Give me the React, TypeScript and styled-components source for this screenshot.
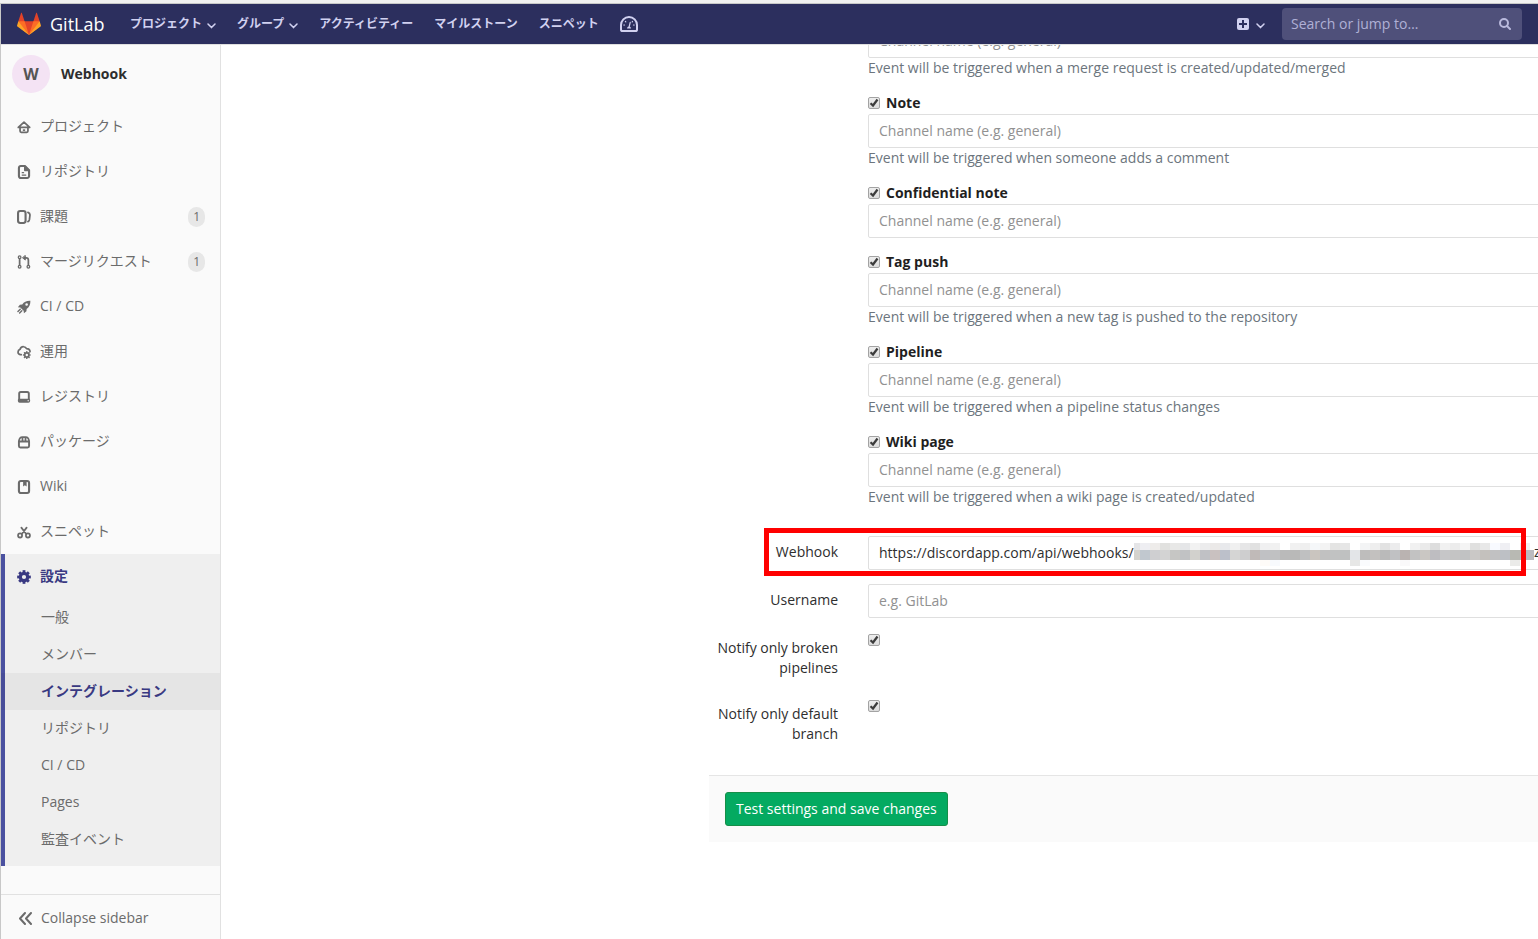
import React, { useState } from "react";
import styled, { createGlobalStyle, css } from "styled-components";

const GlobalStyle = createGlobalStyle`
  *, *::before, *::after { box-sizing: border-box; }
  html, body, #root { height: 100%; }
  body {
    margin: 0;
    overflow: hidden;
    background: #fff;
    color: #2e2e2e;
    font: 14px/20px "Open Sans", "Noto Sans CJK JP", sans-serif;
  }
  a { color: inherit; text-decoration: none; }
  button, input { font: inherit; color: inherit; }
  ul { list-style: none; margin: 0; padding: 0; }
`;

const Page = styled.div`
  display: flex;
  flex-direction: column;
  height: 100%;
  min-height: 0;
  border-top: 3px solid #f1f1f1;
`;

const Frame = styled.div`
  flex: 1;
  min-height: 0;
  display: flex;
  flex-direction: column;
  border-top: 1px solid #c8c8c8;
  border-left: 1px solid #c8c8c8;
`;

/* ---------- top bar ---------- */

const Navbar = styled.header`
  flex: none;
  display: flex;
  align-items: center;
  height: 41px;
  padding: 0 16px;
  background: #2c2f5e;
  border-bottom: 1px solid #dfdfdf;
  color: #d1d1f0;
`;

const Brand = styled.a`
  display: flex;
  align-items: center;
  gap: 9px;
  width: 113px;
  color: #fff;
  font-size: 18px;
`;

const NavList = styled.ul`
  display: flex;
  align-items: center;
  gap: 21px;
  flex: 1;
`;

const NavLink = styled.a`
  display: flex;
  align-items: center;
  gap: 5px;
  font-size: 12px;
  font-weight: 700;
  white-space: nowrap;
`;

const NewButton = styled.button`
  display: flex;
  align-items: center;
  gap: 7px;
  margin-right: 17px;
  padding: 0;
  border: 0;
  background: none;
  color: #d1d1f0;
`;

const SearchBox = styled.label`
  display: flex;
  align-items: center;
  width: 240px;
  height: 32px;
  padding: 0 11px 0 9px;
  border-radius: 4px;
  background: #4f507a;
  color: #b9b9dc;
`;

const SearchInput = styled.input`
  flex: 1;
  min-width: 0;
  padding: 0;
  border: 0;
  outline: 0;
  background: none;
  &::placeholder { color: #b0b0d6; opacity: 1; }
`;

/* ---------- sidebar ---------- */

const Body = styled.div`
  flex: 1;
  min-height: 0;
  display: flex;
`;

const Sidebar = styled.nav`
  flex: none;
  display: flex;
  flex-direction: column;
  width: 220px;
  background: #fafafa;
  border-right: 1px solid #e1e1e1;
  color: #6b6b6b;
`;

const ProjectLink = styled.a`
  display: flex;
  align-items: center;
  gap: 11px;
  height: 59px;
  padding: 0 11px 2px;
  color: #2e2e2e;
  font-weight: 700;
`;

const Avatar = styled.span`
  display: grid;
  place-items: center;
  width: 38px;
  height: 38px;
  border-radius: 50%;
  background: #f4e3f4;
  color: #555;
  font-size: 16px;
`;

const barActive = css`
  background: #efefef;
  padding-bottom: 8px;
  box-shadow: inset 4px 0 0 #4b51a0;
`;

const NavSection = styled.li<{ $active?: boolean }>`
  ${(p) => p.$active && barActive}
`;

const Badge = styled.span`
  margin-left: auto;
  padding: 0 5px;
  border-radius: 10px;
  background: #e7e7e7;
  font-size: 12px;
`;

const SideLink = styled.a<{ $active?: boolean }>`
  display: flex;
  align-items: center;
  gap: 9px;
  height: 45px;
  padding: 0 15px 2px 16px;
  color: ${(p) => (p.$active ? "#393982" : "inherit")};
  font-weight: ${(p) => (p.$active ? 700 : 400)};
  svg, ${Badge} { margin-top: 2px; }
`;

const SubLink = styled.a<{ $active?: boolean }>`
  display: flex;
  align-items: center;
  height: 37px;
  padding: 0 16px 2px 40px;
  background: ${(p) => (p.$active ? "rgba(0, 0, 0, 0.04)" : "none")};
  color: ${(p) => (p.$active ? "#393982" : "inherit")};
  font-weight: ${(p) => (p.$active ? 700 : 400)};
`;

const Collapse = styled.button`
  display: flex;
  align-items: center;
  gap: 8px;
  height: 45px;
  margin-top: auto;
  padding: 2px 16px 0 17px;
  border: 0;
  border-top: 1px solid #e1e1e1;
  background: none;
`;

/* ---------- settings form ---------- */

const Main = styled.main`
  flex: 1;
  min-width: 0;
  overflow: hidden;
  padding-left: 488px;
`;

/* The form is scrolled: its first visible field sits partly under the bar. */
const Form = styled.form`
  margin: -21px -16px 0 0;
`;

const Events = styled.div`
  display: flex;
  flex-direction: column;
  gap: 15px;
  margin: 0 0 28px 159px;
`;

const EventTitle = styled.label`
  display: flex;
  align-items: center;
  gap: 6px;
  height: 20px;
  padding-bottom: 2px;
  color: #1f1f1f;
  font-weight: 700;
`;

const TextInput = styled.input`
  display: block;
  width: 100%;
  height: 34px;
  padding: 0 10px 2px;
  border: 1px solid #dfdfdf;
  border-radius: 2px;
  outline: 0;
  background: #fff;
  &::placeholder { color: #919191; opacity: 1; }
`;

const Help = styled.p`
  margin: 0;
  padding-bottom: 1px;
  color: #6c757d;
`;

const Rows = styled.div`
  display: flex;
  flex-direction: column;
  gap: 14px;
  margin-bottom: 25px;
`;

const Row = styled.div`
  position: relative;
  display: grid;
  grid-template-columns: 129px minmax(0, 1fr);
  column-gap: 30px;
`;

const RowLabel = styled.label`
  padding: 6px 0;
  text-align: right;
`;

const Control = styled.div<{ $tick?: boolean }>`
  position: relative;
  padding-top: ${(p) => (p.$tick ? 2 : 0)}px;
`;

const Tick = styled.span`
  position: relative;
  display: block;
  flex: none;
  width: 12px;
  height: 12px;
  svg { position: absolute; inset: 0; pointer-events: none; }
`;

const TickInput = styled.input`
  appearance: none;
  display: block;
  width: 12px;
  height: 12px;
  margin: 0;
  border: 1px solid #a3a3a3;
  border-radius: 2px;
  background: linear-gradient(#eee, #dcdcdc);
  & + svg { visibility: hidden; }
  &:checked + svg { visibility: visible; }
`;

const Redaction = styled.div`
  position: absolute;
  top: 7px;
  left: 266px;
  display: flex;
  line-height: 18px;
  pointer-events: none;
  svg { flex: none; }
`;

const Highlight = styled.div`
  position: absolute;
  top: -8px;
  bottom: -6px;
  left: 55px;
  right: 28px;
  border: 5px solid #f00;
  pointer-events: none;
`;

const FormFooter = styled.footer`
  padding: 16px;
  border-top: 1px solid #e5e5e5;
  background: #fafafa;
`;

const SaveButton = styled.button`
  height: 34px;
  padding: 0 10px;
  border: 1px solid #168f48;
  border-radius: 3px;
  background: #04aa61;
  color: #fff;
`;

/* ---------- icons ---------- */

const Line = ({ children, size = 14 }: { children: React.ReactNode; size?: number }) => (
  <svg width={size} height={size} viewBox="0 0 16 16" fill="none" stroke="currentColor" strokeWidth="2" strokeLinecap="round" strokeLinejoin="round" aria-hidden="true">
    {children}
  </svg>
);

const ChevronSvg = styled.svg`
  margin-top: 3px;
`;

const Chevron = () => (
  <ChevronSvg width="9" height="6" viewBox="0 0 9 6" fill="none" stroke="currentColor" strokeWidth="1.5" strokeLinecap="round" strokeLinejoin="round" aria-hidden="true">
    <path d="M1 1l3.5 3.6L8 1" />
  </ChevronSvg>
);

const Logo = () => (
  <svg width="24" height="24" viewBox="0 0 36 36" aria-hidden="true">
    <path fill="#e24329" d="M2 14l9.38 9v-9l-4-12.28c-.205-.632-1.176-.632-1.38 0z" />
    <path fill="#e24329" d="M34 14l-9.38 9v-9l4-12.28c.205-.632 1.176-.632 1.38 0z" />
    <path fill="#e24329" d="M18 34.38L3 14h30z" />
    <path fill="#fc6d26" d="M18 34.38L11.38 14H2l4 11z" />
    <path fill="#fc6d26" d="M18 34.38L24.62 14H34l-4 11z" />
    <path fill="#fca326" d="M2 14L.1 20.16c-.18.565 0 1.2.5 1.56l17.42 12.66z" />
    <path fill="#fca326" d="M34 14l1.9 6.16c.18.565 0 1.2-.5 1.56L18 34.38z" />
  </svg>
);

const Gauge = () => (
  <svg width="18" height="16" viewBox="0 0 18 16" fill="none" stroke="currentColor" aria-hidden="true">
    <path strokeWidth="2" d="M2.6 15h12.8c.9 0 1.6-.7 1.6-1.6V9A8 8 0 0 0 1 9v4.400c0 .9.700 1.600 1.600 1.600z" />
    <path strokeWidth="1.200" strokeLinecap="round" d="M9 11.500l1.200-5.200M3.800 9h.7M13.500 9h.7M5.400 5.500l.4.400M12.500 5.500l-.3.400" />
    <path fill="currentColor" stroke="none" d="M7 12.500a2 2 0 0 1 4 0z" />
  </svg>
);

const PlusSquare = () => (
  <svg width="12" height="12" viewBox="0 0 12 12" aria-hidden="true">
    <rect width="12" height="12" rx="2" fill="currentColor" />
    <path d="M6 2v8M2 6h8" stroke="#2c2f5e" strokeWidth="2" />
  </svg>
);

const SearchIcon = () => (
  <svg width="12" height="12" viewBox="0 0 12 12" fill="none" stroke="currentColor" strokeWidth="2" strokeLinecap="round" aria-hidden="true">
    <circle cx="5" cy="5" r="4" />
    <path d="M8 8l3 3" />
  </svg>
);

const CheckMark = () => (
  <svg width="12" height="12" viewBox="0 0 12 12" fill="none" stroke="#3c3c3c" strokeWidth="2.200" aria-hidden="true">
    <path d="M2.500 6.200L5 8.500l4.500-6" />
  </svg>
);

const cogTeeth = [0, 45, 90, 135, 180, 225, 270, 315];

const icons: Record<string, React.ReactNode> = {
  home: (
    <Line>
      <path d="M1.500 8.500L8 2.500l6.500 6zM3.500 9v3.600c0 .8.600 1.400 1.400 1.400h6.200c.8 0 1.400-.6 1.400-1.400V9" />
      <path d="M7.500 11.500h1" />
    </Line>
  ),
  doc: (
    <Line>
      <path strokeWidth="2.400" d="M4.500 1.200H9l4.800 4.800v6.500a2.200 2.200 0 0 1-2.200 2.300H4.500a2.200 2.200 0 0 1-2.300-2.300v-9a2.200 2.200 0 0 1 2.300-2.300z" />
      <path fill="currentColor" d="M9 1.500v4.500h4.500z" />
      <path strokeWidth="1.500" d="M6 8.800h1.500M6 11.500h4" />
    </Line>
  ),
  issues: (
    <Line>
      <rect strokeWidth="2.400" x="1.200" y="1.200" width="8.600" height="13.600" rx="2.400" />
      <path d="M12.500 2.800c1.800.6 2.500 1.500 2.300 3.200l-.6 5c-.2 1.200-.8 1.900-1.700 2.200" />
    </Line>
  ),
  merge: (
    <Line>
      <g strokeWidth="1.500">
        <circle cx="3" cy="2.600" r="1.500" />
        <circle cx="3" cy="13.400" r="1.500" />
        <circle cx="13" cy="13.400" r="1.500" />
      </g>
      <path d="M3 5v6M13 11V6c0-1.700-.8-2.600-2.500-2.600H8.500" />
      <path fill="currentColor" strokeWidth="1" d="M9.500.800v5L6.500 3.400z" />
    </Line>
  ),
  rocket: (
    <svg width="14" height="14" viewBox="0 0 16 16" fill="currentColor" aria-hidden="true">
      <path fillRule="evenodd" d="M15.300.800c-4.300-.2-7.200 1.300-9.300 4.200L3.300 5.300 1 8.200l2.800.3 3.800 3.800.3 2.900 2.900-2.400.2-2.600c3-2.100 4.500-5.100 4.300-9.400zM11 6.700a1.500 1.500 0 1 1 0-3 1.500 1.500 0 0 1 0 3z" />
      <path stroke="currentColor" strokeWidth="1.600" strokeLinecap="round" d="M3.700 10.500l-2.600 2.600M5.500 12.300l-2.500 2.500" />
    </svg>
  ),
  cloud: (
    <Line>
      <path d="M4.800 11H4.200A2.800 2.800 0 0 1 1.200 8c0-1.500 1-2.700 2.200-3 .8-2 2.300-3.200 4.300-3 1.600.1 2.600.9 3.200 2.100 2.300.1 3.900 1.500 4 3.400" />
      <circle cx="11.200" cy="11.500" r="2.400" />
      <g strokeWidth="1.800">
        {cogTeeth.map((a) => (
          <path key={a} d="M11.200 8v-.2" transform={`rotate(${a} 11.200 11.500)`} />
        ))}
      </g>
    </Line>
  ),
  disk: (
    <Line>
      <path strokeWidth="2.200" d="M2.500 10.500V4c0-1 .7-1.800 1.800-1.800h7.400c1.100 0 1.800.8 1.800 1.800v6.500" />
      <path fill="currentColor" stroke="none" fillRule="evenodd" d="M2.500 10h11c.8 0 1.500.7 1.500 1.500v1a2 2 0 0 1-2 2H3a2 2 0 0 1-2-2v-1c0-.8.700-1.500 1.500-1.500zm9.700 1.500v1.300h1.300v-1.300z" />
    </Line>
  ),
  package: (
    <Line>
      <path strokeWidth="2.200" d="M2.200 7.500v5c0 1 .7 1.700 1.700 1.700h8.200c1 0 1.700-.7 1.700-1.700v-5z" />
      <path d="M2.200 7c.4-3 1.800-4.500 3.800-4.500h4c2 0 3.400 1.500 3.800 4.500M6.300 3v4M9.700 3v4" />
    </Line>
  ),
  book: (
    <Line>
      <rect strokeWidth="2.400" x="2.200" y="1.200" width="11.600" height="13.600" rx="2.200" />
      <path fill="currentColor" stroke="none" d="M7 2h4v5.500L9 6 7 7.500z" />
    </Line>
  ),
  scissors: (
    <Line>
      <circle cx="3.500" cy="12" r="2.300" />
      <circle cx="12.500" cy="12" r="2.300" />
      <path d="M5.500 10.200L11 3M10.500 10.200L5 3" />
    </Line>
  ),
  cog: (
    <svg width="14" height="14" viewBox="0 0 16 16" fill="none" stroke="currentColor" aria-hidden="true">
      <circle cx="8" cy="8" r="4.200" strokeWidth="3.600" />
      {cogTeeth.map((a) => (
        <path key={a} strokeWidth="3.200" d="M8 3V.2" transform={`rotate(${a} 8 8)`} />
      ))}
    </svg>
  ),
};

const DoubleLeft = () => (
  <svg width="15" height="14" viewBox="0 0 15 14" fill="none" stroke="#6b6b6b" strokeWidth="2" strokeLinecap="round" strokeLinejoin="round" aria-hidden="true">
    <path d="M7 2L2 7.500 7 13M13 2L8 7.500l5 5.500" />
  </svg>
);

/* ---------- blurred part of the webhook address ---------- */

const upperCells = "e5e5e7 eeeef2 eeecea e1e1df e8e8e7 e5e6e8 f2f2f2 ececed ebe9e8 e8e9ec f0f0f0 e6e6e7 e1e1e1 f0f0f1 f1f1f1 ffffff f1f1f1 efefef f5f7f9 f3f3f3 e4e4e3 e6e6e6 ffffff f3f4f5 eeeeee e2e2e2 ececed ffffff f1f1f1 eaeaea dddddd f1f1f1 ececec f4f4f4 e0e0df e8e8e8 f8faff efeff3 ffffff f1f1f1".split(" ");
const middleCells = "d4d3ce c1c8cf cfcfd1 d3d3d3 c6c6c4 c1c2c4 d2d1cd c0c1c5 c9c1c0 bcc0ca d5d5d4 cececf c0bab8 c0c1c4 c0c1c2 bababa b9b9b8 bfc0c1 cac5bf c1c1c1 c1c2c2 bfc1c1 e3e5e8 bebdbc c3c1bf bababa c0c1c3 bab3b1 c2c2c2 cac7c3 bebdc1 c6c6c8 c4c4c4 c1c2c3 cac8c6 c4c1bd c1c1c2 bdc0c5 b8b9b3 bbbbbf".split(" ");
const lowerCells: Record<number, string> = { 13: "fefbf8", 14: "f8fafd", 22: "e7e7e6", 23: "fafbfd", 27: "faf9fa", 38: "ebebe9" };

const Mosaic = () => (
  <svg width="400" height="23" viewBox="4 0 400 23" shapeRendering="crispEdges" aria-hidden="true">
    {upperCells.map((c, i) => (
      <rect key={`u${i}`} x={i * 10} y="0" width="10" height="7" fill={`#${c}`} />
    ))}
    {middleCells.map((c, i) => (
      <rect key={`m${i}`} x={i * 10} y="7" width="10" height="10" fill={`#${c}`} />
    ))}
    <rect x="400" y="7" width="4" height="10" fill="#bbbbbf" />
    {Object.entries(lowerCells).map(([i, c]) => (
      <rect key={`l${i}`} x={Number(i) * 10} y="17" width="10" height="6" fill={`#${c}`} />
    ))}
  </svg>
);

/* ---------- data ---------- */

const sections = [
  { icon: "home", label: "プロジェクト" },
  { icon: "doc", label: "リポジトリ" },
  { icon: "issues", label: "課題", count: 1 },
  { icon: "merge", label: "マージリクエスト", count: 1 },
  { icon: "rocket", label: "CI / CD" },
  { icon: "cloud", label: "運用" },
  { icon: "disk", label: "レジストリ" },
  { icon: "package", label: "パッケージ" },
  { icon: "book", label: "Wiki" },
  { icon: "scissors", label: "スニペット" },
];

const settings = ["一般", "メンバー", "インテグレーション", "リポジトリ", "CI / CD", "Pages", "監査イベント"];

const events = [
  { id: "merge", help: "Event will be triggered when a merge request is created/updated/merged" },
  { id: "note", title: "Note", help: "Event will be triggered when someone adds a comment" },
  { id: "confidential", title: "Confidential note" },
  { id: "tag", title: "Tag push", help: "Event will be triggered when a new tag is pushed to the repository" },
  { id: "pipeline", title: "Pipeline", help: "Event will be triggered when a pipeline status changes" },
  { id: "wiki", title: "Wiki page", help: "Event will be triggered when a wiki page is created/updated" },
];

const Checkbox = ({ id }: { id: string }) => (
  <Tick>
    <TickInput type="checkbox" id={id} defaultChecked />
    <CheckMark />
  </Tick>
);

export default function App() {
  const [webhook, setWebhook] = useState("https://discordapp.com/api/webhooks/");

  return (
    <Page>
      <GlobalStyle />
      <Frame>
        <Navbar>
          <Brand href="#">
            <Logo />
            GitLab
          </Brand>
          <NavList>
            <li><NavLink href="#">プロジェクト<Chevron /></NavLink></li>
            <li><NavLink href="#">グループ<Chevron /></NavLink></li>
            <li><NavLink href="#">アクティビティー</NavLink></li>
            <li><NavLink href="#">マイルストーン</NavLink></li>
            <li><NavLink href="#">スニペット</NavLink></li>
            <li><NavLink href="#" aria-label="Instance statistics"><Gauge /></NavLink></li>
          </NavList>
          <NewButton type="button" aria-label="New"><PlusSquare /><Chevron /></NewButton>
          <SearchBox>
            <SearchInput type="text" aria-label="Search" placeholder="Search or jump to…" />
            <SearchIcon />
          </SearchBox>
        </Navbar>

        <Body>
          <Sidebar>
            <ProjectLink href="#"><Avatar>W</Avatar>Webhook</ProjectLink>
            <ul>
              {sections.map((s) => (
                <NavSection key={s.label}>
                  <SideLink href="#">
                    {icons[s.icon]}
                    {s.label}
                    {s.count && <Badge>{s.count}</Badge>}
                  </SideLink>
                </NavSection>
              ))}
              <NavSection $active>
                <SideLink href="#" $active>{icons.cog}設定</SideLink>
                <ul>
                  {settings.map((label) => (
                    <li key={label}>
                      <SubLink href="#" $active={label === "インテグレーション"}>{label}</SubLink>
                    </li>
                  ))}
                </ul>
              </NavSection>
            </ul>
            <Collapse type="button"><DoubleLeft />Collapse sidebar</Collapse>
          </Sidebar>

          <Main>
            <Form onSubmit={(e) => e.preventDefault()}>
              <Events>
                {events.map((e) => (
                  <div key={e.id}>
                    {e.title && (
                      <EventTitle htmlFor={e.id}><Checkbox id={e.id} />{e.title}</EventTitle>
                    )}
                    <TextInput type="text" aria-label={`${e.title ?? "Merge request"} channel`} placeholder="Channel name (e.g. general)" />
                    {e.help && <Help>{e.help}</Help>}
                  </div>
                ))}
              </Events>
              <Rows>
                <Row>
                  <RowLabel htmlFor="webhook">Webhook</RowLabel>
                  <Control>
                    <TextInput id="webhook" type="text" value={webhook} onChange={(e) => setWebhook(e.target.value)} />
                    <Redaction><Mosaic />z</Redaction>
                  </Control>
                  <Highlight />
                </Row>
                <Row>
                  <RowLabel htmlFor="username">Username</RowLabel>
                  <Control><TextInput id="username" type="text" placeholder="e.g. GitLab" /></Control>
                </Row>
                <Row>
                  <RowLabel htmlFor="broken">Notify only broken pipelines</RowLabel>
                  <Control $tick><Checkbox id="broken" /></Control>
                </Row>
                <Row>
                  <RowLabel htmlFor="branch">Notify only default branch</RowLabel>
                  <Control $tick><Checkbox id="branch" /></Control>
                </Row>
              </Rows>
              <FormFooter>
                <SaveButton type="submit">Test settings and save changes</SaveButton>
              </FormFooter>
            </Form>
          </Main>
        </Body>
      </Frame>
    </Page>
  );
}
